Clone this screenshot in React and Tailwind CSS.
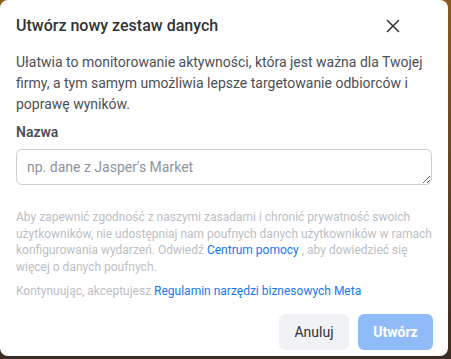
import React from 'react';

// Close icon drawn as two strokes
const CloseIcon = () => (
  <svg width="14" height="14" viewBox="0 0 14 14" fill="none">
    <path d="M1.5 1.5L12.5 12.5M12.5 1.5L1.5 12.5" stroke="#303338" strokeWidth="1.5" strokeLinecap="round" />
  </svg>
);

const App = () => {
  return (
    <div className="w-[451px] h-[359px] bg-gradient-to-b from-[#8a5a1c] to-[#3b2d24] overflow-hidden" style={{ fontFamily: 'Roboto, "Liberation Sans", sans-serif' }}>
      <div className="w-[448px] h-[356px] bg-white rounded-[8px] flex flex-col">
        {/* Header */}
        <div className="h-[52px] flex items-center justify-between pl-4 pr-[43px] shrink-0">
          <h2 className="text-[16px] font-medium text-[#303338]">Utwórz nowy zestaw danych</h2>
          <button className="w-6 h-6 flex items-center justify-center">
            <CloseIcon />
          </button>
        </div>

        {/* Body */}
        <div className="px-4">
          <p className="text-[14px] leading-[21px] text-[#4b4f56]">
            Ułatwia to monitorowanie aktywności, która jest ważna dla Twojej firmy, a tym samym umożliwia lepsze targetowanie odbiorców i poprawę wyników.
          </p>

          <label className="block mt-[7px] text-[14px] leading-[20px] font-semibold text-[#4b4f56]">Nazwa</label>
          <textarea
            rows={1}
            placeholder="np. dane z Jasper's Market"
            className="mt-[7px] block w-full h-[36px] rounded-[6px] border border-[#ccd0d5] px-[10px] py-[7px] text-[14px] leading-[20px] text-[#1c1e21] placeholder:text-[#8d949e] outline-none resize-y"
          />

          <p className="mt-[24px] text-[12px] leading-[16.5px] text-[#bcc0c4]">
            Aby zapewnić zgodność z naszymi zasadami i chronić prywatność swoich użytkowników, nie udostępniaj nam poufnych danych użytkowników w ramach konfigurowania wydarzeń. Odwiedź <a className="text-[#1877f2]">Centrum pomocy</a> , aby dowiedzieć się więcej o danych poufnych.
          </p>
          <p className="mt-[8px] text-[12px] leading-[16.5px] text-[#bcc0c4]">
            Kontynuując, akceptujesz <a className="text-[#1877f2]">Regulamin narzędzi biznesowych Meta</a>
          </p>
        </div>

        {/* Footer */}
        <div className="mt-auto flex justify-end gap-[9px] pr-[15px] pb-[6px]">
          <button className="h-[36px] w-[70px] rounded-[6px] bg-[#f0f2f5] text-[14px] text-[#303338]">Anuluj</button>
          <button className="h-[36px] w-[75px] rounded-[6px] bg-[#8fbcf9] text-[14px] font-bold text-white">Utwórz</button>
        </div>
      </div>
    </div>
  );
};

export default App;
